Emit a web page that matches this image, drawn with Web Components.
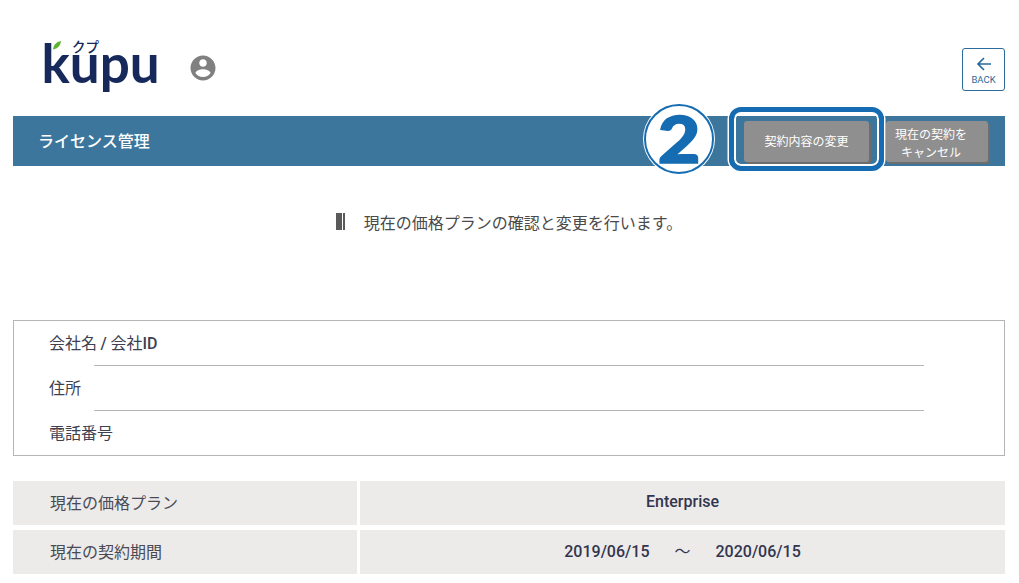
<!DOCTYPE html>
<html lang="ja">
<head>
<meta charset="utf-8">
<title>ライセンス管理</title>
<style>
  html, body { margin: 0; background: #fff; }
  body {
    font-family: "Noto Sans CJK JP", "Roboto", sans-serif;
    color: #3f4150;
    overflow: hidden;
    height: 583px;
  }
  .latin { font-family: Roboto, sans-serif; font-weight: 500; }
</style>
</head>
<body>
<license-page>
  <site-header></site-header>
  <title-bar heading="ライセンス管理">
    <action-button slot="actions" style="--w:125px;margin-right:17px">契約内容の変更</action-button>
    <action-button slot="actions" style="--w:102px;margin-right:17px;--pad:12px;--top:4px">現在の契約を<br>キャンセル</action-button>
  </title-bar>
  <intro-note>現在の価格プランの確認と変更を行います。</intro-note>
  <info-box>
    <info-line>会社名 <span class="latin">/</span> 会社<span class="latin">ID</span></info-line>
    <info-line>住所</info-line>
    <info-line>電話番号</info-line>
  </info-box>
  <plan-table>
    <plan-row label="現在の価格プラン">Enterprise</plan-row>
    <plan-row label="現在の契約期間">2019/06/15<span style="font-family:'Noto Sans CJK JP';font-weight:400;margin:0 25px">～</span>2020/06/15</plan-row>
  </plan-table>
</license-page>

<script>
const sansJp = '"Noto Sans CJK JP", sans-serif'

function define(name, html) {
  customElements.define(name, class extends HTMLElement {
    constructor() {
      super()
      this.attachShadow({ mode: 'open' }).innerHTML = html
    }
  })
}

define('license-page', `
  <style>
    :host { display: block; }
  </style>
  <slot></slot>
`)

define('site-header', `
  <style>
    :host {
      display: flex;
      height: 116px;
      box-sizing: border-box;
      padding: 0 14px 0 41px;
    }
    .logo { display: block; width: 121px; height: 116px; }
    .user { display: block; width: 30px; height: 30px; margin: 53px 0 0 26px; fill: #808080; }
    .back {
      margin: 48px 0 0 auto;
      width: 43px;
      height: 43px;
      box-sizing: border-box;
      border: 1px solid #2b6a9b;
      border-radius: 3px;
      color: #2b6a9b;
      display: flex;
      flex-direction: column;
      align-items: center;
      font: 9.500px Roboto, sans-serif;
      padding-top: 7px;
    }
    .back svg { display: block; width: 16px; height: 16px; fill: none; stroke: #2b6a9b; stroke-width: 1.7; margin-bottom: 2px; }
  </style>
  <svg class="logo" viewBox="0 0 121 116">
    <text x="0.500" y="83" font-family="Lato, sans-serif" font-weight="700" font-size="53" fill="#17295a">kupu</text>
    <path d="M12 49.500C12.500 45 15 42 20 41C19.500 45.500 17 48.500 12 49.500Z" fill="#5cb531"/>
    <text x="31" y="52" font-family="${sansJp}" font-size="13.500" font-weight="500" fill="#17295a">クプ</text>
  </svg>
  <svg class="user" viewBox="0 0 24 24"><path d="M12 2C6.480 2 2 6.480 2 12s4.480 10 10 10 10-4.480 10-10S17.520 2 12 2zm0 3c1.660 0 3 1.340 3 3s-1.340 3-3 3-3-1.340-3-3 1.340-3 3-3zm0 14.200c-2.500 0-4.710-1.280-6-3.220.030-1.990 4-3.080 6-3.080 1.990 0 5.970 1.090 6 3.080-1.290 1.940-3.500 3.220-6 3.220z"/></svg>
  <div class="back">
    <svg viewBox="0 0 16 16"><path d="M15 8H2M8 2L2 8 8 14"/></svg>
    BACK
  </div>
`)

define('title-bar', `
  <style>
    :host {
      display: flex;
      align-items: center;
      position: relative;
      height: 50px;
      margin: 0 14px 0 13px;
      background: #3c769c;
    }
    h1 {
      margin: 0 auto 3px 25px;
      font: 500 16px ${sansJp};
      color: #fff;
    }
    .frame {
      position: absolute;
      left: 716px;
      top: -9px;
      width: 155px;
      height: 64px;
      box-sizing: border-box;
      border: 5px solid #156cb2;
      border-radius: 12px;
      box-shadow: inset 0 0 0 2px #fff, 0 0 0 1.500px #fff;
    }
    .badge {
      position: absolute;
      left: 631px;
      top: -12px;
      width: 70px;
      height: 70px;
      box-sizing: border-box;
      border-radius: 50%;
      background: #fff;
      border: 2.500px solid #156cb2;
      box-shadow: 0 0 0 1px #fff;
      color: #156cb2;
      font: 900 64px/65px Lato, sans-serif;
      text-align: center;
    }
    .badge span {
      display: block;
      transform: scaleX(1.15);
      -webkit-text-stroke: 1.500px #156cb2;
    }
  </style>
  <h1></h1>
  <slot name="actions"></slot>
  <div class="badge"><span>2</span></div>
  <div class="frame"></div>
`)

customElements.whenDefined('title-bar').then(() => {
  document.querySelectorAll('title-bar').forEach(el => {
    el.shadowRoot.querySelector('h1').textContent = el.getAttribute('heading')
  })
})

define('action-button', `
  <style>
    :host {
      display: flex;
      align-items: center;
      justify-content: center;
      box-sizing: border-box;
      width: var(--w);
      height: 41px;
      padding: var(--top, 0) var(--pad, 0) 0 0;
      background: #8f8f8f;
      border-radius: 3px;
      box-shadow: 2px 2px 0 #6d6d6d;
      color: #fff;
      font: 12px/18px ${sansJp};
      text-align: center;
    }
  </style>
  <span><slot></slot></span>
`)

define('intro-note', `
  <style>
    :host {
      display: flex;
      align-items: center;
      justify-content: center;
      height: 115px;
      padding: 0 1px 4px 0;
      margin-bottom: 39px;
      font: 16px ${sansJp};
      color: #4a4a4a;
      box-sizing: border-box;
    }
    .mark {
      width: 9px;
      height: 17px;
      margin-right: 19px;
      box-sizing: border-box;
      border-left: 6px solid #5a5a5a;
      border-right: 2px solid #5a5a5a;
    }
  </style>
  <span class="mark"></span><slot></slot>
`)

define('info-box', `
  <style>
    :host {
      display: block;
      box-sizing: border-box;
      height: 136px;
      margin: 0 14px 25px 13px;
      border: 1px solid #b5b5b5;
    }
  </style>
  <slot></slot>
`)

define('info-line', `
  <style>
    :host {
      display: flex;
      align-items: center;
      white-space: pre;
      box-sizing: border-box;
      height: 45px;
      padding: 0 0 3px 35px;
      font: 16px ${sansJp};
      color: #3f4150;
      position: relative;
    }
    :host(:not(:last-child))::after {
      content: "";
      position: absolute;
      left: 80px;
      right: 80px;
      bottom: 0;
      border-bottom: 1px solid #b5b5b5;
    }
  </style>
  <span><slot></slot></span>
`)

define('plan-table', `
  <style>
    :host {
      display: flex;
      flex-direction: column;
      gap: 5px;
      margin: 0 14px 0 13px;
    }
  </style>
  <slot></slot>
`)

customElements.define('plan-row', class extends HTMLElement {
  constructor() {
    super()
    this.attachShadow({ mode: 'open' }).innerHTML = `
      <style>
        :host { display: grid; grid-template-columns: 344px 1fr; gap: 3px; height: 44px; }
        .label, .value { background: #ecebe9; display: flex; align-items: center; box-sizing: border-box; }
        .label { padding: 0 0 2px 37px; font: 16px ${sansJp}; color: #4a4a55; }
        .value {
          justify-content: center;
          font: 500 16px Roboto, sans-serif;
          color: #33354f;
          padding-bottom: 4px;
        }
      </style>
      <div class="label"></div>
      <div class="value"><span><slot></slot></span></div>
    `
  }

  connectedCallback() {
    this.shadowRoot.querySelector('.label').textContent = this.getAttribute('label')
  }
})
</script>
</body>
</html>
